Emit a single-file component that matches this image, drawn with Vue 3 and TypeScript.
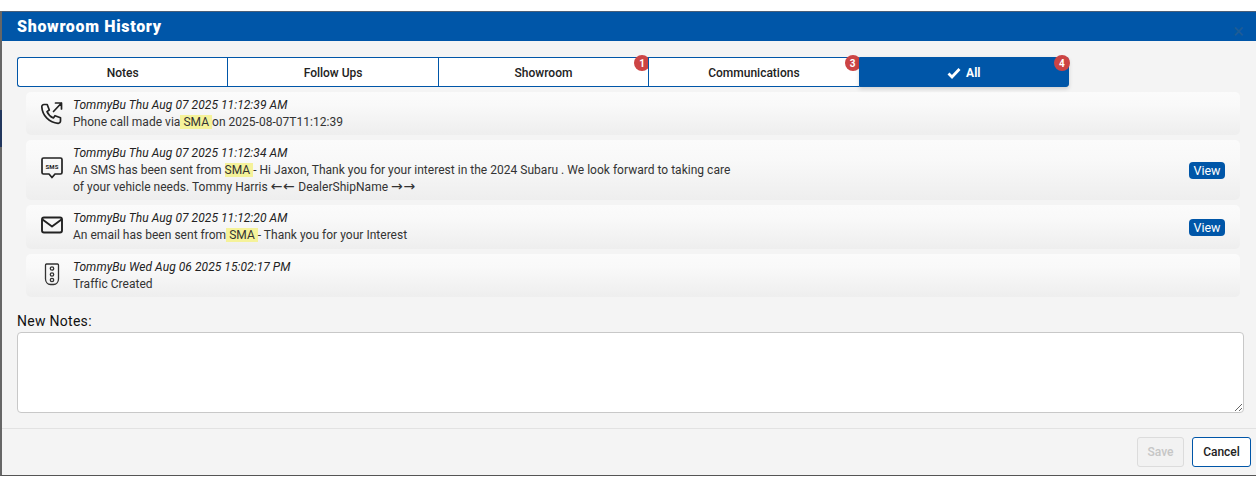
<script setup lang="ts">
interface Tab { label: string; badge?: number; active?: boolean }
const tabs: Tab[] = [
  { label: 'Notes' },
  { label: 'Follow Ups' },
  { label: 'Showroom', badge: 1 },
  { label: 'Communications', badge: 3 },
  { label: 'All', badge: 4, active: true },
]
</script>

<template>
  <div class="page">
    <span class="behind"></span>
    <section class="modal">
      <header class="head">
        <h1>Showroom History</h1>
        <span class="close">×</span>
      </header>
      <div class="body">
        <nav class="tabs">
          <div v-for="t in tabs" :key="t.label" class="tab" :class="{ active: t.active }">
            <svg v-if="t.active" class="check" viewBox="0 0 14 12"><path d="M1.5 6.500 5 10 12.500 2" fill="none" stroke="#fff" stroke-width="2.800" /></svg>
            {{ t.label }}
            <span v-if="t.badge" class="badge">{{ t.badge }}</span>
          </div>
        </nav>

        <div class="rows">
          <article class="row r1">
            <svg class="icon" viewBox="0 0 24 24" fill="none" stroke="#222" stroke-width="1.700" stroke-linecap="round" stroke-linejoin="round">
              <path d="M4 2.500h3.200L9.300 8 7 9.600a12 12 0 0 0 6.400 6.400l1.600-2.300 5.500 2v3.400a2.200 2.200 0 0 1-2.400 2.200A17.500 17.500 0 0 1 1.800 4.900 2.200 2.200 0 0 1 4 2.500Z" />
              <path d="M13.500 9.500 21.500 1M15.500 1h6v6" />
            </svg>
            <div class="text">
              <div class="meta">TommyBu Thu Aug 07 2025 11:12:39 AM</div>
              <div class="msg">Phone call made via<mark> SMA </mark>on 2025-08-07T11:12:39</div>
            </div>
          </article>

          <article class="row r2">
            <svg class="icon" viewBox="0 0 24 24" fill="none" stroke="#222" stroke-width="1.700" stroke-linejoin="round">
              <path d="M3.500 0h17A1.500 1.500 0 0 1 22 1.500v13a1.500 1.500 0 0 1-1.500 1.500H15l-3 3.500L9 16H3.500A1.500 1.500 0 0 1 2 14.500v-13A1.500 1.500 0 0 1 3.500 0Z" />
              <text x="12" y="10.500" text-anchor="middle" class="sms">SMS</text>
            </svg>
            <div class="text">
              <div class="meta">TommyBu Thu Aug 07 2025 11:12:34 AM</div>
              <div class="msg">An SMS has been sent from <mark>SMA </mark>- Hi Jaxon, Thank you for your interest in the 2024 Subaru . We look forward to taking care<br />of your vehicle needs. Tommy Harris <span class="arrows">←←</span> DealerShipName <span class="arrows">→→</span></div>
            </div>
            <button class="view">View</button>
          </article>

          <article class="row r3">
            <svg class="icon" viewBox="0 0 24 24" fill="none" stroke="#222" stroke-width="1.900" stroke-linejoin="round">
              <rect x="2" y="2.500" width="20" height="15" rx="2" />
              <path d="m2.500 4.500 9.500 7 9.500-7" />
            </svg>
            <div class="text">
              <div class="meta">TommyBu Thu Aug 07 2025 11:12:20 AM</div>
              <div class="msg">An email has been sent from<mark> SMA </mark>- Thank you for your Interest</div>
            </div>
            <button class="view">View</button>
          </article>

          <article class="row r4">
            <svg class="icon" viewBox="0 0 24 24" fill="none" stroke="#333" stroke-width="1.300">
              <path d="M6.500 0h11A1.300 1.300 0 0 1 18.500 1.500V15a5.500 5.500 0 0 1-5 5.500h-3a5.500 5.500 0 0 1-5-5.500V1.500A1.300 1.300 0 0 1 6.500 0Z" />
              <circle cx="12" cy="4.500" r="1.700" />
              <circle cx="12" cy="10.500" r="1.700" />
              <circle cx="12" cy="16" r="1.700" />
            </svg>
            <div class="text">
              <div class="meta">TommyBu Wed Aug 06 2025 15:02:17 PM</div>
              <div class="msg">Traffic Created</div>
            </div>
          </article>
        </div>

        <label class="label" for="notes">New Notes:</label>
        <textarea id="notes" class="notes"></textarea>
      </div>
      <footer class="foot">
        <button class="btn save" disabled>Save</button>
        <button class="btn cancel">Cancel</button>
      </footer>
    </section>
  </div>
</template>

<style>
html, body { margin: 0; background: #fff; }
</style>

<style scoped>
.page {
  position: relative;
  width: 1256px;
  height: 477px;
  padding-top: 11px;
  box-sizing: border-box;
  overflow: hidden;
  font-family: Roboto, "Liberation Sans", sans-serif;
  color: #222;
}
.behind {
  position: absolute;
  left: 0;
  top: 110px;
  width: 2px;
  height: 37px;
  background: #22375e;
}
.modal {
  width: 1256px;
  height: 465px;
  box-sizing: border-box;
  background: #f4f4f4;
  border-left: 2px solid #666;
  border-bottom: 1px solid #555;
  display: flex;
  flex-direction: column;
}
.head {
  height: 30px;
  flex: none;
  box-sizing: border-box;
  border-top: 1px solid #4a5f78;
  background: #0056a8;
  display: flex;
  align-items: center;
  justify-content: space-between;
  padding: 0 12px 0 15px;
}
.head h1 {
  margin: 0;
  color: #fff;
  font-size: 16px;
  font-weight: 900;
  letter-spacing: 0.68px;
}
.close {
  color: #1d5c96;
  font-size: 20px;
  line-height: 18px;
  margin-top: 8px;
}
.body {
  flex: 1;
  padding: 16px 12px 0 15px;
  display: flex;
  flex-direction: column;
}
.tabs {
  width: 1052px;
  height: 30px;
  flex: none;
  display: grid;
  grid-template-columns: repeat(5, 1fr);
  box-sizing: border-box;
}
.tab {
  position: relative;
  box-sizing: border-box;
  padding-top: 2px;
  background: #fff;
  border: 1px solid #0056a8;
  border-right-width: 0;
  display: flex;
  align-items: center;
  justify-content: center;
  gap: 5px;
  font-size: 12px;
  font-weight: 500;
  letter-spacing: 0;
  color: #222;
}
.tab:first-child { border-radius: 3px 0 0 3px; }
.tab:last-child { border-right-width: 1px; border-radius: 0 3px 3px 0; }
.tab.active {
  background: #0056a8;
  color: #fff;
  font-weight: 700;
  box-shadow: 0 2px 4px rgba(0, 0, 0, 0.15);
}
.check { width: 14px; height: 12px; }
.badge {
  position: absolute;
  top: -3px;
  right: -2px;
  width: 16px;
  height: 16px;
  border-radius: 50%;
  background: #cc4444;
  color: #fff;
  font-size: 10px;
  font-weight: 700;
  letter-spacing: 0;
  display: flex;
  align-items: center;
  justify-content: center;
}
.rows {
  margin: 5px 4px 0 9px;
  display: flex;
  flex-direction: column;
  gap: 5px;
}
.row {
  display: flex;
  align-items: center;
  box-sizing: border-box;
  padding: 0 15px 0 14px;
  border-radius: 5px;
  background: linear-gradient(#fbfbfb, #f9f9f9 30%, #eeeeee);
}
.r1 { height: 43px; }
.r2 { height: 60px; }
.r3 { height: 44px; }
.r4 { height: 43px; }
.icon { width: 24px; height: 24px; flex: none; margin-right: 9px; overflow: visible; }
.sms { font: 700 6px Roboto, sans-serif; fill: #222; stroke: none; letter-spacing: 0.2px; }
.text { flex: 1; font-size: 12px; line-height: 17px; letter-spacing: 0.02px; color: #333; }
.meta { font-style: italic; color: #222; letter-spacing: 0.06px; }
.arrows { font-family: "DejaVu Sans", sans-serif; font-size: 14px; line-height: 1; letter-spacing: 0.6px; }
mark { background: #f5f29a; color: inherit; }
.view {
  width: 36px;
  height: 17px;
  padding: 0;
  border: 0;
  border-radius: 4px;
  background: #0056a8;
  color: #fff;
  font: 400 12.5px/17px Roboto, sans-serif;
}
.label {
  margin-top: 14px;
  font-size: 14px;
  line-height: 21px;
  letter-spacing: 0.28px;
  color: #111;
}
.notes {
  display: block;
  width: 1227px;
  height: 81px;
  box-sizing: border-box;
  background: #fff;
  border: 1px solid #c8c8c8;
  border-radius: 4px;
}
.foot {
  height: 47px;
  flex: none;
  margin-top: 15px;
  border-top: 1px solid #e2e2e2;
  box-sizing: border-box;
  display: flex;
  justify-content: flex-end;
  align-items: flex-start;
  gap: 8px;
  padding: 8px 5px 0 0;
}
.btn {
  height: 30px;
  padding: 0;
  border-radius: 3px;
  font: 500 12px Roboto, sans-serif;
}
.save {
  width: 47px;
  background: #f2f2f2;
  border: 1px solid #dcdcdc;
  color: #c6c6c6;
}
.cancel {
  width: 59px;
  background: #fff;
  border: 1px solid #0056a8;
  color: #222;
}
</style>
